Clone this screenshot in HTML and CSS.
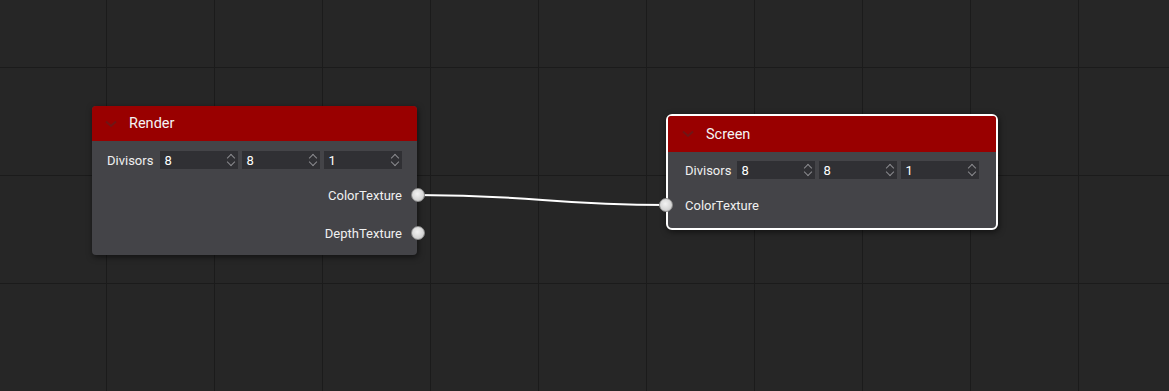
FILE: index.html
```html
<!DOCTYPE html>
<html lang="en">
<head>
    <meta charset="UTF-8">
    <meta name="viewport" content="width=device-width, initial-scale=1.0">
    <title>Node Editor</title>
    <link rel="stylesheet" href="styles.css">
</head>
<body>
    <div class="canvas">
        <svg class="links" width="1169" height="391">
            <path d="M417 195 C 540 195, 545 205, 668 205" />
        </svg>

        <div class="node node-render">
            <div class="node-header">
                <svg class="chevron" width="12" height="8" viewBox="0 0 12 8"><path d="M1 1.5 L6 6 L11 1.5" /></svg>
                <span class="title">Render</span>
            </div>
            <div class="node-body">
                <div class="row">
                    <span class="label">Divisors</span>
                    <div class="inputs">
                        <div class="num"><span>8</span><i class="spin"></i></div>
                        <div class="num"><span>8</span><i class="spin"></i></div>
                        <div class="num"><span>1</span><i class="spin"></i></div>
                    </div>
                </div>
                <div class="row out">
                    <span class="label">ColorTexture</span>
                    <span class="socket"></span>
                </div>
                <div class="row out">
                    <span class="label">DepthTexture</span>
                    <span class="socket"></span>
                </div>
            </div>
        </div>

        <div class="node node-screen selected">
            <div class="node-header">
                <svg class="chevron" width="12" height="8" viewBox="0 0 12 8"><path d="M1 1.5 L6 6 L11 1.5" /></svg>
                <span class="title">Screen</span>
            </div>
            <div class="node-body">
                <div class="row">
                    <span class="label">Divisors</span>
                    <div class="inputs">
                        <div class="num"><span>8</span><i class="spin"></i></div>
                        <div class="num"><span>8</span><i class="spin"></i></div>
                        <div class="num"><span>1</span><i class="spin"></i></div>
                    </div>
                </div>
                <div class="row in">
                    <span class="socket"></span>
                    <span class="label">ColorTexture</span>
                </div>
            </div>
        </div>
    </div>
</body>
</html>
```

FILE: styles.css
```css
body {
    margin: 0;
    font-family: Roboto, 'Liberation Sans', sans-serif;
    background-color: #262626;
    overflow: hidden;
}

.canvas {
    position: relative;
    width: 1169px;
    height: 391px;
    background-color: #262626;
    background-image:
        linear-gradient(to right, #1b1b1b 1px, transparent 1px),
        linear-gradient(to bottom, #1b1b1b 1px, transparent 1px);
    background-size: 108px 108px;
    background-position: -2px 67px;
}

.links {
    position: absolute;
    left: 0;
    top: 0;
}

.links path {
    fill: none;
    stroke: #ffffff;
    stroke-width: 2;
}

.node {
    position: absolute;
    background-color: #444448;
    border-radius: 4px;
    box-shadow: 1px 2px 6px rgba(0,0,0,0.55);
    color: #ffffff;
}

.node-render {
    left: 92px;
    top: 106px;
    width: 325px;
}

.node-screen {
    left: 666px;
    top: 114px;
    width: 328px;
}

.selected {
    border: 2px solid #ffffff;
    border-radius: 6px;
}

.node-header {
    display: flex;
    align-items: center;
    height: 35px;
    padding-left: 13px;
    background-color: #990000;
    border-radius: 4px 4px 0 0;
}

.selected .node-header {
    height: 36px;
    padding-left: 14px;
    border-radius: 3px 3px 0 0;
}

.chevron path {
    fill: none;
    stroke: #701515;
    stroke-width: 2;
}

.title {
    margin-left: 12px;
    font-size: 14.5px;
    color: #f4f4f4;
}

.node-body {
    display: flex;
    flex-direction: column;
    gap: 14px;
    padding: 10px 0;
}

.selected .node-body {
    gap: 14px;
    padding: 9px 0 11px;
}

.row {
    position: relative;
    display: flex;
    align-items: center;
    height: 24px;
    font-size: 13px;
}

.row:first-child {
    height: 18px;
    padding-left: 15px;
}

.selected .row:first-child {
    padding-left: 17px;
}

.label {
    color: #f0f0f0;
}

.inputs {
    display: flex;
    gap: 4px;
    margin-left: 7px;
}

.selected .inputs {
    margin-left: 6px;
}

.num {
    display: flex;
    align-items: center;
    justify-content: space-between;
    width: 78px;
    height: 18px;
    padding-left: 4px;
    box-sizing: border-box;
    background-color: #303034;
    font-size: 13px;
}

.spin {
    position: relative;
    width: 10px;
    height: 16px;
    margin-right: 2px;
}

.spin::before,
.spin::after {
    content: "";
    position: absolute;
    left: 2px;
    width: 5px;
    height: 5px;
    border-left: 1.3px solid #8a8a8e;
    border-top: 1.3px solid #8a8a8e;
}

.spin::before {
    top: 3px;
    transform: rotate(45deg);
}

.spin::after {
    bottom: 3px;
    transform: rotate(225deg);
}

.row.out {
    justify-content: flex-end;
    padding-right: 15px;
}

.row.in {
    padding-left: 17px;
}

.socket {
    position: absolute;
    top: 50%;
    width: 12px;
    height: 12px;
    margin-top: -7.5px;
    border-radius: 50%;
    background: radial-gradient(circle at 45% 40%, #f2f2f2 0%, #d6d6d6 60%, #b8b8b8 100%);
    border: 1.5px solid #8c8c8c;
}

.row.out .socket {
    right: -8px;
}

.row.in .socket {
    left: -9.5px;
}
```
